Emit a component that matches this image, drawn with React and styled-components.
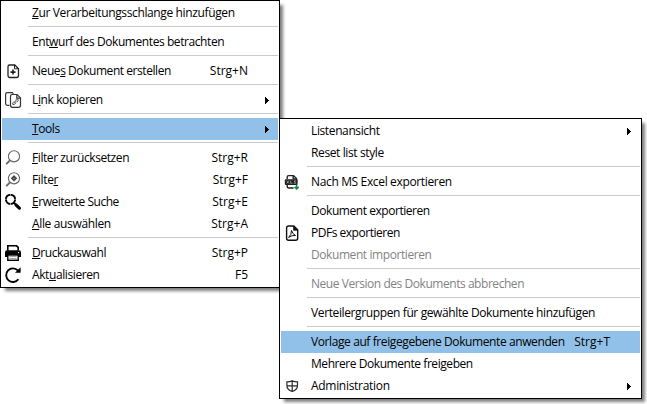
import styled, { createGlobalStyle } from "styled-components";

const mainItems = [
	{ label: "&Zur Verarbeitungsschlange hinzufügen", track: -0.37 },
	{ separator: true },
	{ label: "Ent&wurf des Dokumentes betrachten", track: -0.42 },
	{ separator: true },
	{ label: "Neue&s Dokument erstellen", shortcut: "Strg+N", icon: NewDocumentIcon, track: -0.44 },
	{ separator: true },
	{ label: "L&ink kopieren", icon: CopyLinkIcon, submenu: true, track: -0.38 },
	{ separator: true },
	{ label: "&Tools", submenu: true, active: true, track: -0.4 },
	{ separator: true },
	{ label: "&Filter zurücksetzen", shortcut: "Strg+R", icon: ClearFilterIcon, track: -0.42 },
	{ label: "Filte&r", shortcut: "Strg+F", icon: FilterIcon, track: -0.35 },
	{ label: "&Erweiterte Suche", shortcut: "Strg+E", icon: SearchIcon, track: -0.48 },
	{ label: "&Alle auswählen", shortcut: "Strg+A", track: -0.35 },
	{ separator: true },
	{ label: "&Druckauswahl", shortcut: "Strg+P", icon: PrinterIcon, track: -0.42 },
	{ label: "Akt&ualisieren", shortcut: "F5", icon: RefreshIcon, track: -0.4 },
];

const toolItems = [
	{ label: "Listenansicht", submenu: true, track: -0.38 },
	{ label: "Reset list style", track: -0.38 },
	{ separator: true },
	{ label: "Nach MS Excel exportieren", icon: ExcelIcon, track: -0.35 },
	{ separator: true },
	{ label: "Dokument exportieren", track: -0.45 },
	{ label: "PDFs exportieren", icon: PdfIcon, track: -0.48 },
	{ label: "Dokument importieren", disabled: true, track: -0.42 },
	{ separator: true },
	{ label: "Neue Version des Dokuments abbrechen", disabled: true, track: -0.45 },
	{ separator: true },
	{ label: "Verteilergruppen für gewählte Dokumente hinzufügen", track: -0.38 },
	{ separator: true },
	{
		label: "Vorlage auf freigegebene Dokumente anwenden",
		shortcut: "Strg+T",
		active: true,
		track: -0.4,
	},
	{ label: "Mehrere Dokumente freigeben", track: -0.44 },
	{ label: "Administration", icon: ShieldIcon, submenu: true, track: -0.3 },
];

export default function App() {
	return (
		<>
			<GlobalStyle />
			<Desktop>
				<Menu items={mainItems} width={280} />
				<Submenu>
					<Menu items={toolItems} width={363} />
				</Submenu>
			</Desktop>
		</>
	);
}

function Menu({ items, width }) {
	return (
		<MenuContainer $width={width} role="menu">
			{items.map((item, i) =>
				item.separator ? <Separator key={i} /> : <MenuItem key={i} {...item} />
			)}
		</MenuContainer>
	);
}

function MenuItem({ label, shortcut, icon: ItemIcon, submenu, active, disabled, track }) {
	return (
		<Row role="menuitem" $active={active} $disabled={disabled}>
			<IconSlot>{ItemIcon && <ItemIcon />}</IconSlot>
			<Label $track={track}>
				<Mnemonic text={label} />
			</Label>
			<Shortcut>{shortcut}</Shortcut>
			<ArrowSlot>{submenu && <Arrow />}</ArrowSlot>
		</Row>
	);
}

// the letter after "&" is the access key
function Mnemonic({ text }) {
	const at = text.indexOf("&");
	if (at < 0) return text;
	return (
		<>
			{text.slice(0, at)}
			<u>{text[at + 1]}</u>
			{text.slice(at + 2)}
		</>
	);
}

function NewDocumentIcon() {
	return (
		<Icon viewBox="0 0 22 22" fill="none" stroke="#222" strokeWidth="1.3">
			<path d="M7.6 5h5.2l3.7 3.7v6.9q0 1.9-1.9 1.9h-7q-1.6 0-1.6-1.9V6.8q0-1.8 1.6-1.8z" />
			<path d="M12.5 5v3.8h3.8" strokeWidth="1" />
			<path d="M11 9.6v5M8.5 12.1h5" strokeWidth="1.6" />
		</Icon>
	);
}

function CopyLinkIcon() {
	return (
		<Icon viewBox="0 0 22 22" fill="none" stroke="#333" strokeWidth="1.2">
			<path d="M7.4 16.3H5.4Q3.6 16.3 3.6 14.5V5.4Q3.6 3.6 5.4 3.6h4.8l1.3 1.2" />
			<path d="M10.3 5.5h4.8l3.4 3.4v7.4q0 2-2 2h-6q-2 0-2-2V7.5q0-2 1.8-2z" />
			<path d="M14.8 5.7v3.5h3.5" />
			<path
				d="M12.5 12.2l-1.8 1.9q-.5 1.8 1.4 1.5l1.9-1.8M13.2 11.4l1.7-1.5q1.8 0 1.3 1.8l-1.5 1.6M12.2 14.2l2.6-2.8"
				stroke="#555"
				strokeWidth="1"
			/>
		</Icon>
	);
}

function ClearFilterIcon() {
	return (
		<Icon viewBox="0 0 22 22" fill="none" stroke="#666" strokeWidth="1.1">
			<circle cx="12" cy="9.3" r="5.6" />
			<path d="M8 13.4l-3.8 3.8" strokeWidth="1.8" />
		</Icon>
	);
}

function FilterIcon() {
	return (
		<Icon viewBox="0 0 22 22" fill="none" stroke="#666" strokeWidth="1.1">
			<circle cx="12" cy="9.3" r="5.6" />
			<path d="M8 13.4l-3.8 3.8" strokeWidth="1.8" />
			<path d="M12 6l1.6 1.7 1.7 1.6-1.7 1.6-1.6 1.7-1.6-1.7-1.7-1.6 1.7-1.6z" fill="#444" stroke="none" />
			<circle cx="12" cy="9.3" r=".6" fill="#ccc" stroke="none" />
		</Icon>
	);
}

function SearchIcon() {
	return (
		<Icon viewBox="0 0 22 22" fill="none" stroke="#000">
			<circle cx="8.5" cy="8.3" r="4.6" strokeWidth="2" />
			<path d="M8.5 2v2.6M8.5 12v2.6M2.2 8.3h2.6M12.2 8.3h2.6" stroke="#fff" strokeWidth=".6" />
			<path d="M11.6 11.5l2.4 2.3" strokeWidth="2" />
			<path d="M14.2 14.1l3.2 3" strokeWidth="3.2" strokeLinecap="round" />
		</Icon>
	);
}

function PrinterIcon() {
	return (
		<Icon viewBox="0 0 22 22">
			<path d="M5.8 8.5V3.8h8.7l1.7 1.6v3.1" fill="none" stroke="#000" strokeWidth="1.6" />
			<path d="M5 8.3h12q2 0 2 2.2V15h-3v-2H6v2H3v-4.5q0-2.2 2-2.2z" />
			<rect x="5.8" y="13" width="10.4" height="5.3" fill="#fff" stroke="#000" strokeWidth="1.4" />
			<path d="M7.4 14.6h7.2M7.4 16.6h7.2" stroke="#555" strokeWidth=".6" />
			<circle cx="16.6" cy="10.6" r=".7" fill="#fff" />
		</Icon>
	);
}

function RefreshIcon() {
	return (
		<Icon viewBox="0 0 22 22" fill="none" stroke="#000" strokeWidth="1.9">
			<path d="M16.4 15.3A6.8 6.8 0 1 1 16 6.6" />
			<path d="M18.6 3.2v5.6H13z" fill="#000" stroke="none" />
		</Icon>
	);
}

function ExcelIcon() {
	return (
		<Icon viewBox="0 0 22 22" fill="none" stroke="#222" strokeWidth="1.4">
			<path d="M6.2 8V6q0-1.4 1.4-1.4h4.9l3 3V9M6.2 14v1.6q0 1.4 1.4 1.4h5" />
			<path d="M12.2 4.7v3.2h3.2" />
			<rect x="3.8" y="8.2" width="12.8" height="5.8" rx="1" fill="#222" stroke="none" />
			<path
				d="M5.7 9.7l2.2 2.8M7.9 9.7l-2.2 2.8M9.7 9.6v2.7h1.7M15 9.9h-1.8l1.4 2.4h-1.8"
				stroke="#aaa"
				strokeWidth=".8"
			/>
			<path d="M15.6 13.8v4M13.5 15.9l2.1 2.1 2.1-2.1" stroke="#168344" strokeWidth="1.5" />
		</Icon>
	);
}

function PdfIcon() {
	return (
		<Icon viewBox="0 0 22 22" fill="none" stroke="#111" strokeWidth="1.4">
			<path d="M7.6 4h5.2l3.9 3.9v8.4q0 2-2 2H7.6q-2 0-2-2V6q0-2 2-2z" />
			<path d="M12.6 4v4.2h4z" fill="#111" strokeWidth=".8" />
			<path d="M10.5 8.4q.9 3.6 4.1 5.1-3.5-.6-7 1.9 3.1-2.8 2.9-7z" strokeWidth="1" />
		</Icon>
	);
}

function ShieldIcon() {
	return (
		<Icon viewBox="0 0 22 22" fill="none" stroke="#2b2b2b" strokeWidth="1.2">
			<path d="M11.2 5.8Q8.8 7 5.9 6.9v3.6q0 4.2 5.3 6 5.3-1.8 5.3-6V6.9q-2.9.1-5.3-1.1zM11.2 5.8v10.6M6 10.9h10.4" />
		</Icon>
	);
}

function Arrow() {
	return (
		<ArrowSvg viewBox="0 0 4 7" shapeRendering="crispEdges">
			<path d="M0 0h1v1h1v1h1v1h1v1h-1v1h-1v1h-1v1h-1z" />
		</ArrowSvg>
	);
}

const GlobalStyle = createGlobalStyle`
	body {
		margin: 0;
		background: #ffffff;
		overflow: hidden;
	}
`;

const Desktop = styled.div`
	position: relative;
	width: 647px;
	height: 404px;
	overflow: hidden;
	background: #ffffff;
`;

const Submenu = styled.div`
	position: absolute;
	left: 279px;
	top: 118px;
`;

const MenuContainer = styled.div`
	box-sizing: border-box;
	width: ${(props) => props.$width}px;
	padding: 1px;
	border: 1px solid #000000;
	background: #ffffff;
	box-shadow: 4px 4px 3px -1px rgba(0, 0, 0, 0.5);
	font-family: "Open Sans", "Noto Sans", sans-serif;
	font-size: 12px;
	line-height: 22px;
	cursor: default;
`;

const Row = styled.div`
	display: flex;
	align-items: center;
	height: 22px;
	color: ${(props) => (props.$disabled ? "#838383" : "#000000")};
	background: ${(props) => (props.$active ? "#91c1e8" : "transparent")};
	white-space: nowrap;
`;

const Separator = styled.div`
	height: 1px;
	margin: 2px 0 4px 26px;
	background: #cbcbcb;
`;

const IconSlot = styled.span`
	display: flex;
	flex: none;
	width: 30px;
`;

const Icon = styled.svg`
	width: 22px;
	height: 22px;
`;

const Label = styled.span`
	letter-spacing: ${(props) => props.$track || 0}px;
	u {
		text-decoration-thickness: 1px;
		text-underline-offset: 1px;
		text-decoration-skip-ink: none;
	}
`;

const Shortcut = styled.span`
	margin-left: auto;
`;

const ArrowSlot = styled.span`
	display: flex;
	flex: none;
	box-sizing: border-box;
	width: 30px;
	padding-left: 17px;
`;

const ArrowSvg = styled.svg`
	width: 4px;
	height: 7px;
	flex: none;
`;
